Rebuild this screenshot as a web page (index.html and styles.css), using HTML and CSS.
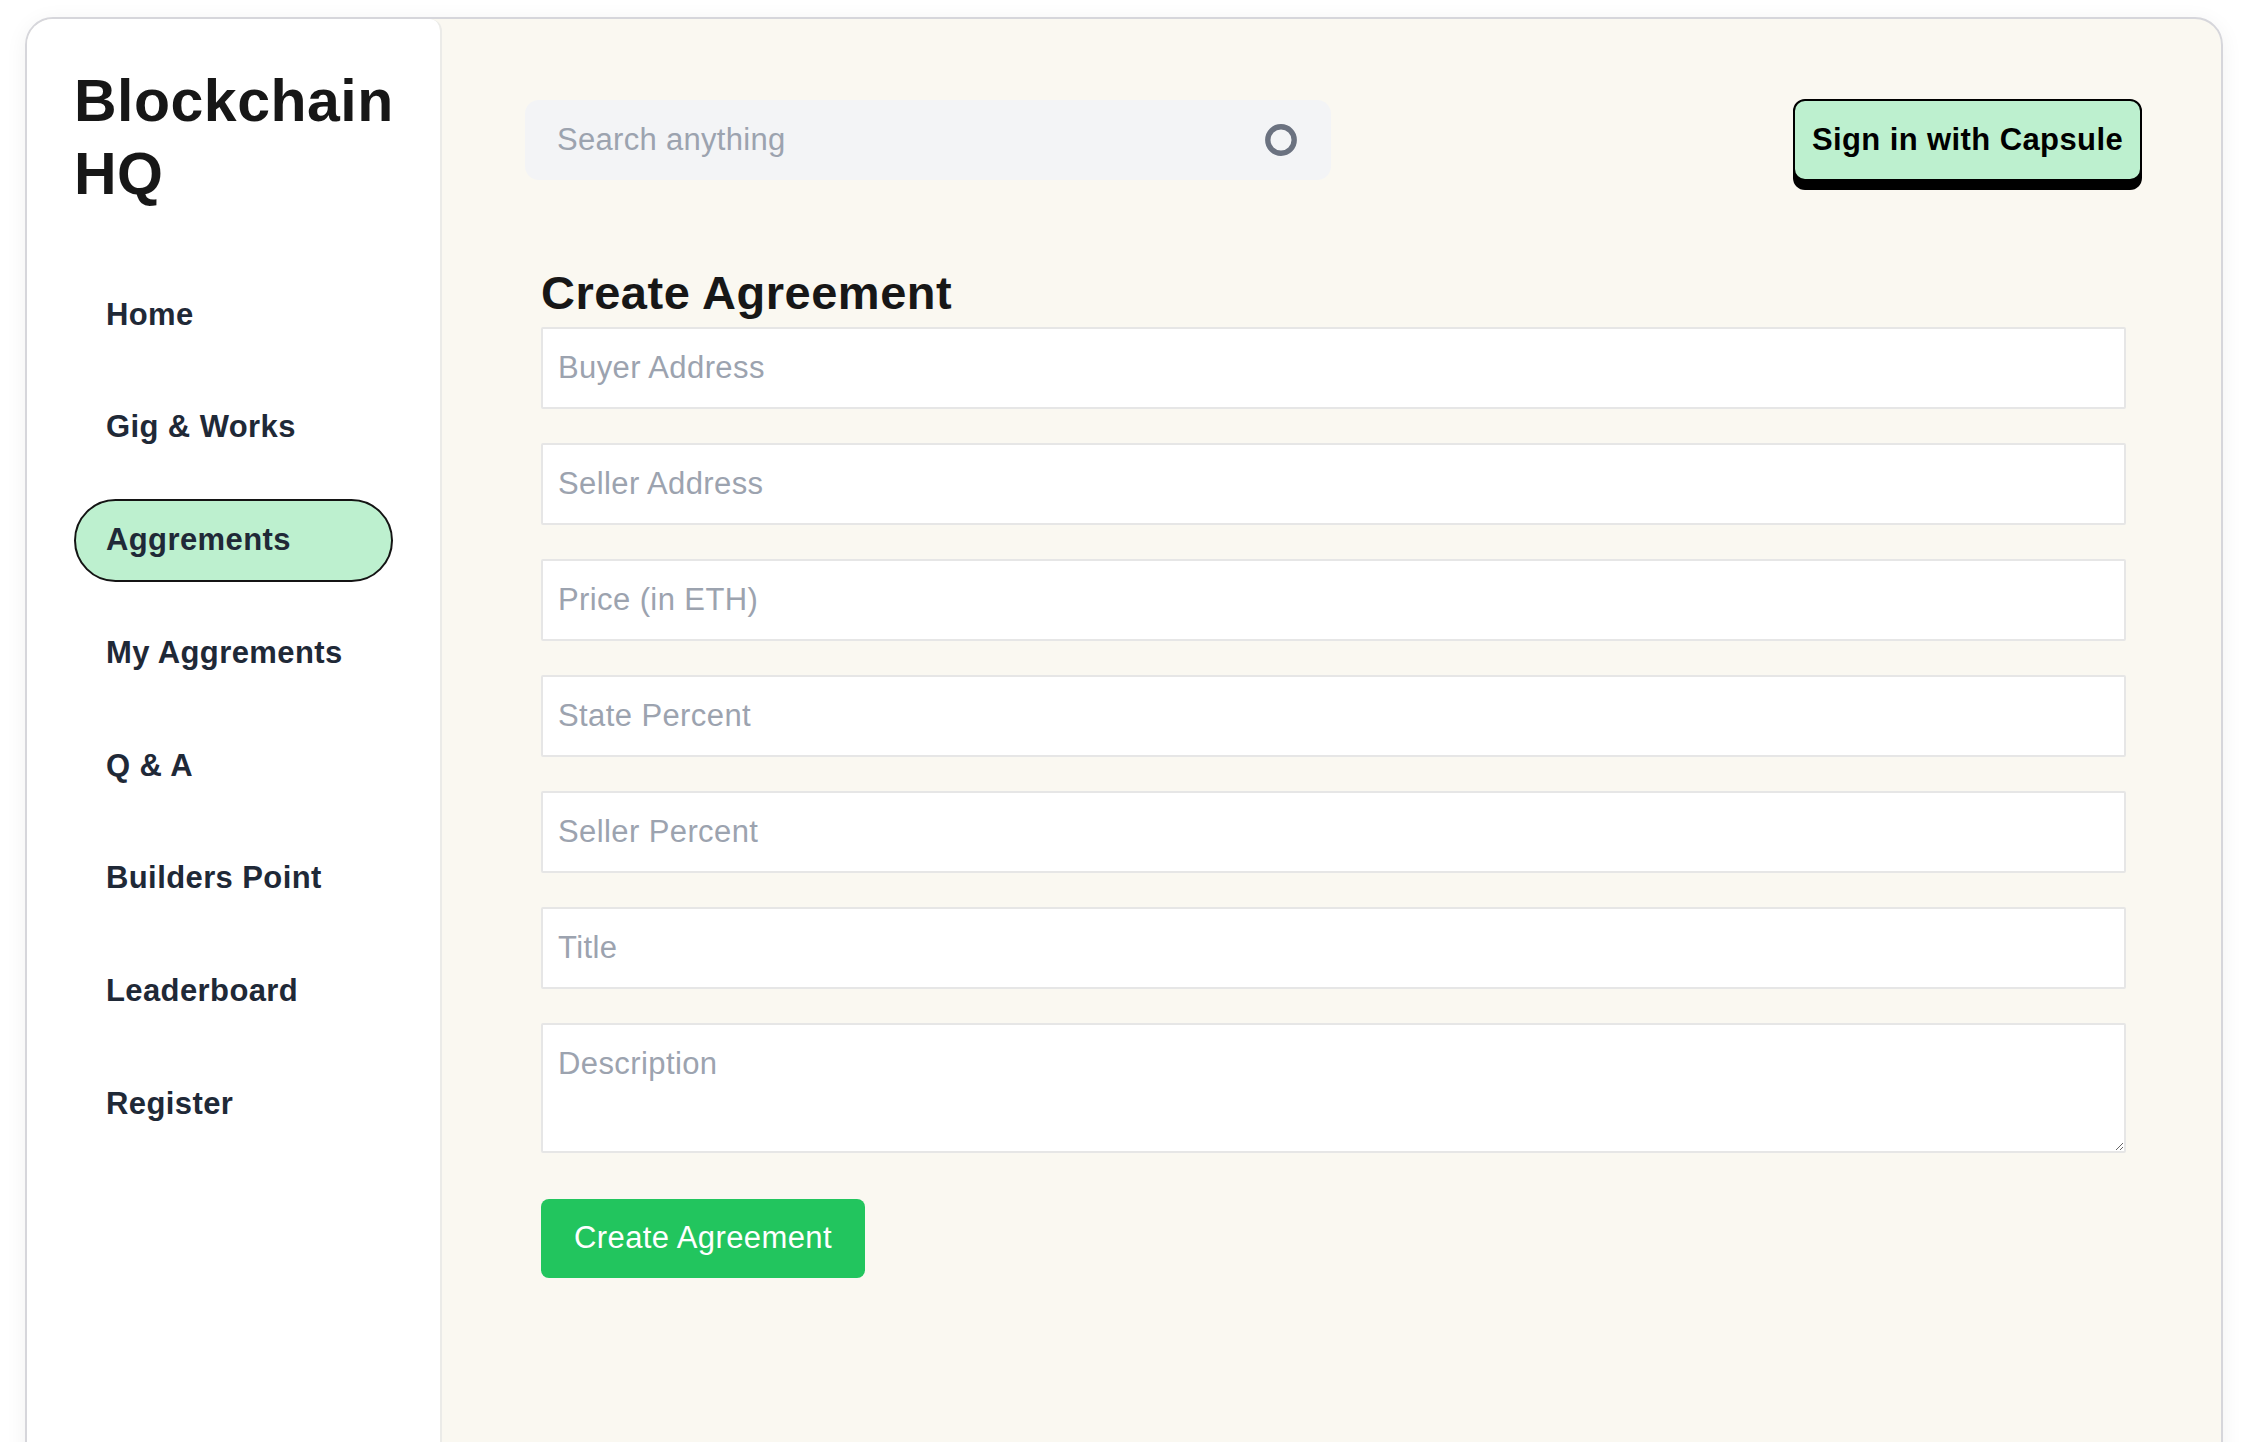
FILE: index.html
```html
<!DOCTYPE html>
<html lang="en">
<head>
<meta charset="utf-8">
<title>Blockchain HQ</title>
<link rel="stylesheet" href="styles.css">
</head>
<body>
<div class="page">
  <div class="card">
    <aside class="sidebar">
      <h1 class="brand">Blockchain HQ</h1>
      <nav class="nav">
        <a class="nav-item">Home</a>
        <a class="nav-item">Gig &amp; Works</a>
        <a class="nav-item active">Aggrements</a>
        <a class="nav-item">My Aggrements</a>
        <a class="nav-item">Q &amp; A</a>
        <a class="nav-item">Builders Point</a>
        <a class="nav-item">Leaderboard</a>
        <a class="nav-item">Register</a>
      </nav>
    </aside>
    <main class="main">
      <header class="topbar">
        <div class="search">
          <input class="search-input" type="text" placeholder="Search anything">
          <svg class="search-icon" width="32" height="32" viewBox="0 0 32 32"><circle cx="16" cy="16" r="13.2" fill="none" stroke="#6b7280" stroke-width="5.4"/></svg>
        </div>
        <button class="signin">Sign in with Capsule</button>
      </header>
      <section class="form">
        <h2 class="form-title">Create Agreement</h2>
        <input class="field" type="text" placeholder="Buyer Address">
        <input class="field" type="text" placeholder="Seller Address">
        <input class="field" type="text" placeholder="Price (in ETH)">
        <input class="field" type="text" placeholder="State Percent">
        <input class="field" type="text" placeholder="Seller Percent">
        <input class="field" type="text" placeholder="Title">
        <textarea class="field area" rows="2" placeholder="Description"></textarea>
        <button class="submit">Create Agreement</button>
      </section>
    </main>
  </div>
</div>
</body>
</html>
```

FILE: styles.css
```css
* { box-sizing: border-box; }

html, body {
  margin: 0;
  height: 100%;
  overflow: hidden;
  background: #ffffff;
  font-family: "Liberation Sans", Arial, Helvetica, sans-serif;
  letter-spacing: 0.4px;
}

.page {
  padding: 17px 23px 0 25px;
}

.card {
  display: flex;
  height: 1500px;
  background: #faf8f1;
  border: 2px solid #d6d6db;
  border-radius: 28px;
  overflow: hidden;
  box-shadow: 0 4px 22px rgba(0, 0, 0, 0.06);
}

.sidebar {
  flex: 0 0 415px;
  background: #ffffff;
  border-right: 2px solid #ebebe8;
  border-top-right-radius: 12px;
  padding: 46px 0 0 47px;
}

.brand {
  margin: 0;
  font-size: 59px;
  line-height: 73px;
  font-weight: 700;
  color: #171717;
  letter-spacing: 0.5px;
}

.nav {
  display: flex;
  flex-direction: column;
  gap: 29.8px;
  margin-top: 62px;
}

.nav-item {
  display: flex;
  align-items: center;
  width: 319px;
  height: 83px;
  padding-left: 30px;
  border: 2px solid transparent;
  border-radius: 999px;
  font-size: 31px;
  font-weight: 700;
  color: #1f2937;
  cursor: pointer;
}

.nav-item.active {
  background: #bdf0cf;
  border-color: #141414;
}

.main {
  flex: 1;
  padding: 80px 79px 0 83px;
}

.topbar {
  display: flex;
  align-items: center;
  justify-content: space-between;
}

.search {
  display: flex;
  align-items: center;
  justify-content: space-between;
  width: 806px;
  height: 80px;
  padding: 0 34px 0 32px;
  background: #f3f4f6;
  border-radius: 14px;
}

.search-input {
  flex: 1;
  border: none;
  outline: none;
  background: transparent;
  font-family: inherit;
  letter-spacing: 0.3px;
  font-size: 31px;
  color: #374151;
  padding: 0;
}

.search-input::placeholder { color: #9ca3af; }

.search-icon { flex: 0 0 auto; display: block; }

.signin {
  height: 82px;
  width: 349px;
  padding: 0 12px;
  background: #bdf0cf;
  border: 2px solid #000000;
  border-radius: 12px;
  box-shadow: 0 9px 0 #000000;
  font-family: inherit;
  letter-spacing: inherit;
  font-size: 31px;
  font-weight: 700;
  color: #000000;
  cursor: pointer;
}

.form {
  padding: 0 16px;
}

.form-title {
  margin: 81px 0 3.5px;
  font-size: 47px;
  line-height: 61px;
  font-weight: 700;
  color: #171717;
  letter-spacing: 0.5px;
}

.field {
  display: block;
  width: 100%;
  height: 82px;
  margin: 0 0 34px;
  padding: 0 15px;
  background: #ffffff;
  border: 2px solid #e6e6e6;
  border-radius: 2px;
  font-family: inherit;
  letter-spacing: inherit;
  font-size: 31px;
  color: #111827;
  outline: none;
}

.field::placeholder { color: #9ca3af; }

.area {
  height: 130px;
  padding: 16px 15px;
  line-height: 46px;
  margin-bottom: 46px;
  resize: both;
}

.submit {
  display: block;
  width: 324px;
  height: 79px;
  padding: 0 20px;
  background: #22c55e;
  color: #ffffff;
  border: none;
  border-radius: 8px;
  font-family: inherit;
  letter-spacing: inherit;
  font-size: 31px;
  cursor: pointer;
}
```
